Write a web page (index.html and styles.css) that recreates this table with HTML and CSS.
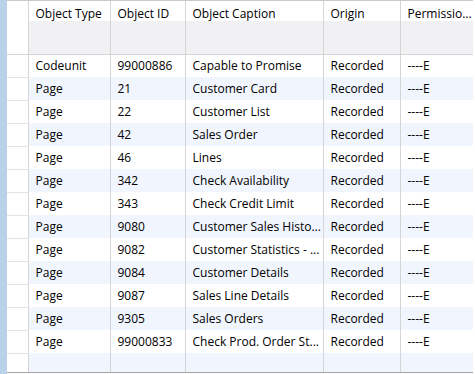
FILE: index.html
```html
<!DOCTYPE html>
<html lang="en">
<head>
    <meta charset="UTF-8">
    <title>Objects</title>
    <link rel="stylesheet" href="styles.css">
</head>
<body>
    <div class="frame">
        <div class="strip"></div>
        <div class="grid">
            <table>
                <colgroup>
                    <col class="c-sel">
                    <col class="c-type">
                    <col class="c-id">
                    <col class="c-caption">
                    <col class="c-origin">
                    <col class="c-perm">
                </colgroup>
                <thead>
                    <tr class="head">
                        <th class="sel"></th>
                        <th>Object Type</th>
                        <th>Object ID</th>
                        <th>Object Caption</th>
                        <th>Origin</th>
                        <th>Permissio...</th>
                    </tr>
                    <tr class="filter">
                        <th class="sel"></th>
                        <th></th><th></th><th></th><th></th><th></th>
                    </tr>
                </thead>
                <tbody>
                    <tr><td class="sel"></td><td>Codeunit</td><td>99000886</td><td>Capable to Promise</td><td>Recorded</td><td>----E</td></tr>
                    <tr><td class="sel"></td><td>Page</td><td>21</td><td>Customer Card</td><td>Recorded</td><td>----E</td></tr>
                    <tr><td class="sel"></td><td>Page</td><td>22</td><td>Customer List</td><td>Recorded</td><td>----E</td></tr>
                    <tr><td class="sel"></td><td>Page</td><td>42</td><td>Sales Order</td><td>Recorded</td><td>----E</td></tr>
                    <tr><td class="sel"></td><td>Page</td><td>46</td><td>Lines</td><td>Recorded</td><td>----E</td></tr>
                    <tr><td class="sel"></td><td>Page</td><td>342</td><td>Check Availability</td><td>Recorded</td><td>----E</td></tr>
                    <tr><td class="sel"></td><td>Page</td><td>343</td><td>Check Credit Limit</td><td>Recorded</td><td>----E</td></tr>
                    <tr><td class="sel"></td><td>Page</td><td>9080</td><td>Customer Sales Histo...</td><td>Recorded</td><td>----E</td></tr>
                    <tr><td class="sel"></td><td>Page</td><td>9082</td><td>Customer Statistics - ...</td><td>Recorded</td><td>----E</td></tr>
                    <tr><td class="sel"></td><td>Page</td><td>9084</td><td>Customer Details</td><td>Recorded</td><td>----E</td></tr>
                    <tr><td class="sel"></td><td>Page</td><td>9087</td><td>Sales Line Details</td><td>Recorded</td><td>----E</td></tr>
                    <tr><td class="sel"></td><td>Page</td><td>9305</td><td>Sales Orders</td><td>Recorded</td><td>----E</td></tr>
                    <tr><td class="sel"></td><td>Page</td><td>99000833</td><td>Check Prod. Order St...</td><td>Recorded</td><td>----E</td></tr>
                    <tr class="empty"><td class="sel"></td><td></td><td></td><td></td><td></td><td></td></tr>
                </tbody>
            </table>
        </div>
    </div>
</body>
</html>
```

FILE: styles.css
```css
body {
    margin: 0;
    font-family: "Open Sans", "Noto Sans", sans-serif;
    font-size: 12px;
    color: #000;
    background: #fff;
}

.frame {
    display: flex;
    height: 374px;
    overflow: hidden;
}

.strip {
    width: 7px;
    flex: none;
    background-color: #bad1ea;
}

.grid {
    width: 466px;
    height: 373px;
    border-top: 1px solid #c9c9c9;
    border-bottom: 1px solid #a5a5a5;
    box-sizing: border-box;
    overflow: hidden;
}

table {
    border-collapse: collapse;
    table-layout: fixed;
    width: 466px;
}

.c-sel { width: 21px; }
.c-type { width: 82px; }
.c-id { width: 75px; }
.c-caption { width: 138px; }
.c-origin { width: 77px; }
.c-perm { width: 73px; }

th, td {
    border-right: 1px solid #d5d5d5;
    padding: 0 0 0 7px;
    text-align: left;
    font-weight: normal;
    white-space: nowrap;
    overflow: hidden;
    box-sizing: border-box;
}

/* caption row sits a little low, like the original grid */
.head th {
    height: 20px;
    padding-top: 6px;
    background: #fff;
    vertical-align: top;
    line-height: 14px;
}

.filter th {
    height: 33px;
    background: #f1f1f3;
    border-bottom: 1px solid #d5d5d5;
}

.head .sel, .filter .sel {
    background: #fff;
}

td {
    height: 23px;
}

tbody tr:nth-child(even) td {
    background: #f1f5fd;
}

td.sel, th.sel {
    padding: 0;
    border-right: 1px solid #d5d5d5;
}

tbody td.sel {
    background: #fff;
    border-bottom: 1px solid #e3e3e3;
}

tbody tr:nth-child(even) td.sel {
    background: #fff;
}
```
